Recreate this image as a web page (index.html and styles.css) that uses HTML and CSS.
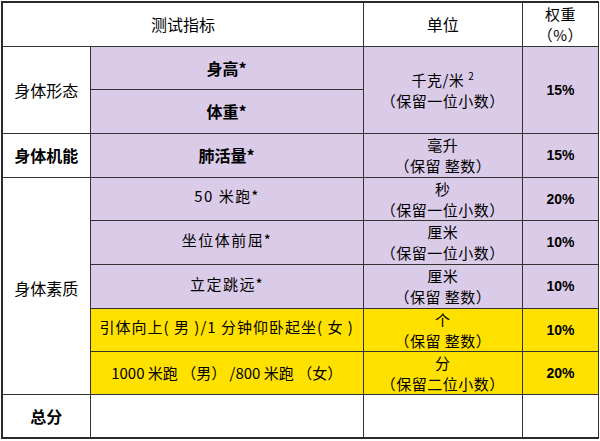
FILE: index.html
```html
<!DOCTYPE html>
<html lang="zh">
<head>
<meta charset="utf-8">
<link rel="stylesheet" href="styles.css">
</head>
<body>
<table class="grid">
  <colgroup>
    <col class="c1"><col class="c2"><col class="c3"><col class="c4">
  </colgroup>
  <tr class="r-head">
    <td colspan="2" class="white">测试指标</td>
    <td class="white">单位</td>
    <td class="white two">权重<br>（%）</td>
  </tr>
  <tr class="r43">
    <td rowspan="2" class="white">身体形态</td>
    <td class="purple b">身高*</td>
    <td rowspan="2" class="purple two">千克/米<sup>2</sup><br>（保留一位小数）</td>
    <td rowspan="2" class="purple pct">15%</td>
  </tr>
  <tr class="r44">
    <td class="purple b">体重*</td>
  </tr>
  <tr class="r44">
    <td class="white b">身体机能</td>
    <td class="purple b">肺活量*</td>
    <td class="purple two">毫升<br>（保留 整数）</td>
    <td class="purple pct">15%</td>
  </tr>
  <tr class="r42">
    <td rowspan="5" class="white low">身体素质</td>
    <td class="purple up sp">50 米跑<span class="star">*</span></td>
    <td class="purple two">秒<br>（保留一位小数）</td>
    <td class="purple pct">20%</td>
  </tr>
  <tr class="r44">
    <td class="purple up sp">坐位体前屈<span class="star">*</span></td>
    <td class="purple two">厘米<br>（保留一位小数）</td>
    <td class="purple pct">10%</td>
  </tr>
  <tr class="r44">
    <td class="purple up sp">立定跳远<span class="star">*</span></td>
    <td class="purple two">厘米<br>（保留 整数）</td>
    <td class="purple pct">10%</td>
  </tr>
  <tr class="r43">
    <td class="yellow up sp">引体向上( 男 )/1 分钟仰卧起坐( 女 )</td>
    <td class="yellow two">个<br>（保留 整数）</td>
    <td class="yellow pct">10%</td>
  </tr>
  <tr class="r43">
    <td class="yellow sp tight">1000 米跑 （男） /800 米跑 （女）</td>
    <td class="yellow two">分<br>（保留二位小数）</td>
    <td class="yellow pct">20%</td>
  </tr>
  <tr class="r44">
    <td class="white b">总分</td>
    <td class="white"></td>
    <td class="white"></td>
    <td class="white"></td>
  </tr>
</table>
</body>
</html>
```

FILE: styles.css
```css
html, body {
  margin: 0;
  padding: 0;
  background: #ffffff;
}

body {
  padding: 1px 0 0 1px;
  font-family: "Noto Sans CJK SC", "Noto Sans", sans-serif;
  color: #000000;
}

.grid {
  border-collapse: collapse;
  table-layout: fixed;
  width: 598px;
  border-top: 2px solid #2a2a2a;
  border-left: 2px solid #2a2a2a;
  border-bottom: 2px solid #2a2a2a;
  border-right: 1px solid #8a8a8a;
}

.c1 { width: 88px; }
.c2 { width: 273px; }
.c3 { width: 159px; }
.c4 { width: 76px; }

.grid td {
  border: 1px solid #333333;
  padding: 0;
  text-align: center;
  vertical-align: middle;
  font-size: 16px;
  line-height: 20px;
  white-space: nowrap;
}

.r-head { height: 44px; }
.r42 { height: 42px; }
.r43 { height: 43px; }
.r44 { height: 44px; }

.white { background: #ffffff; }
.purple { background: #dacbe8; }
.yellow { background: #ffe100; }

.b { font-weight: 700; }

.grid td.two {
  font-size: 15px;
  line-height: 21px;
  letter-spacing: 0.5px;
}

.up { padding-bottom: 6px !important; }

.low { padding-top: 4px !important; }

.sp {
  letter-spacing: 1.5px;
  font-size: 15px !important;
}

.sp.yellow {
  letter-spacing: 1px;
}

.sp.tight {
  letter-spacing: 0;
}

.star {
  font-size: 12px;
  font-weight: 700;
  vertical-align: 2px;
}

.pct {
  font-family: "Liberation Sans", Arial, sans-serif;
  font-weight: 700;
  font-size: 14px !important;
}

sup {
  font-size: 10px;
  line-height: 0;
  vertical-align: 6px;
  margin-left: 4px;
}
```
